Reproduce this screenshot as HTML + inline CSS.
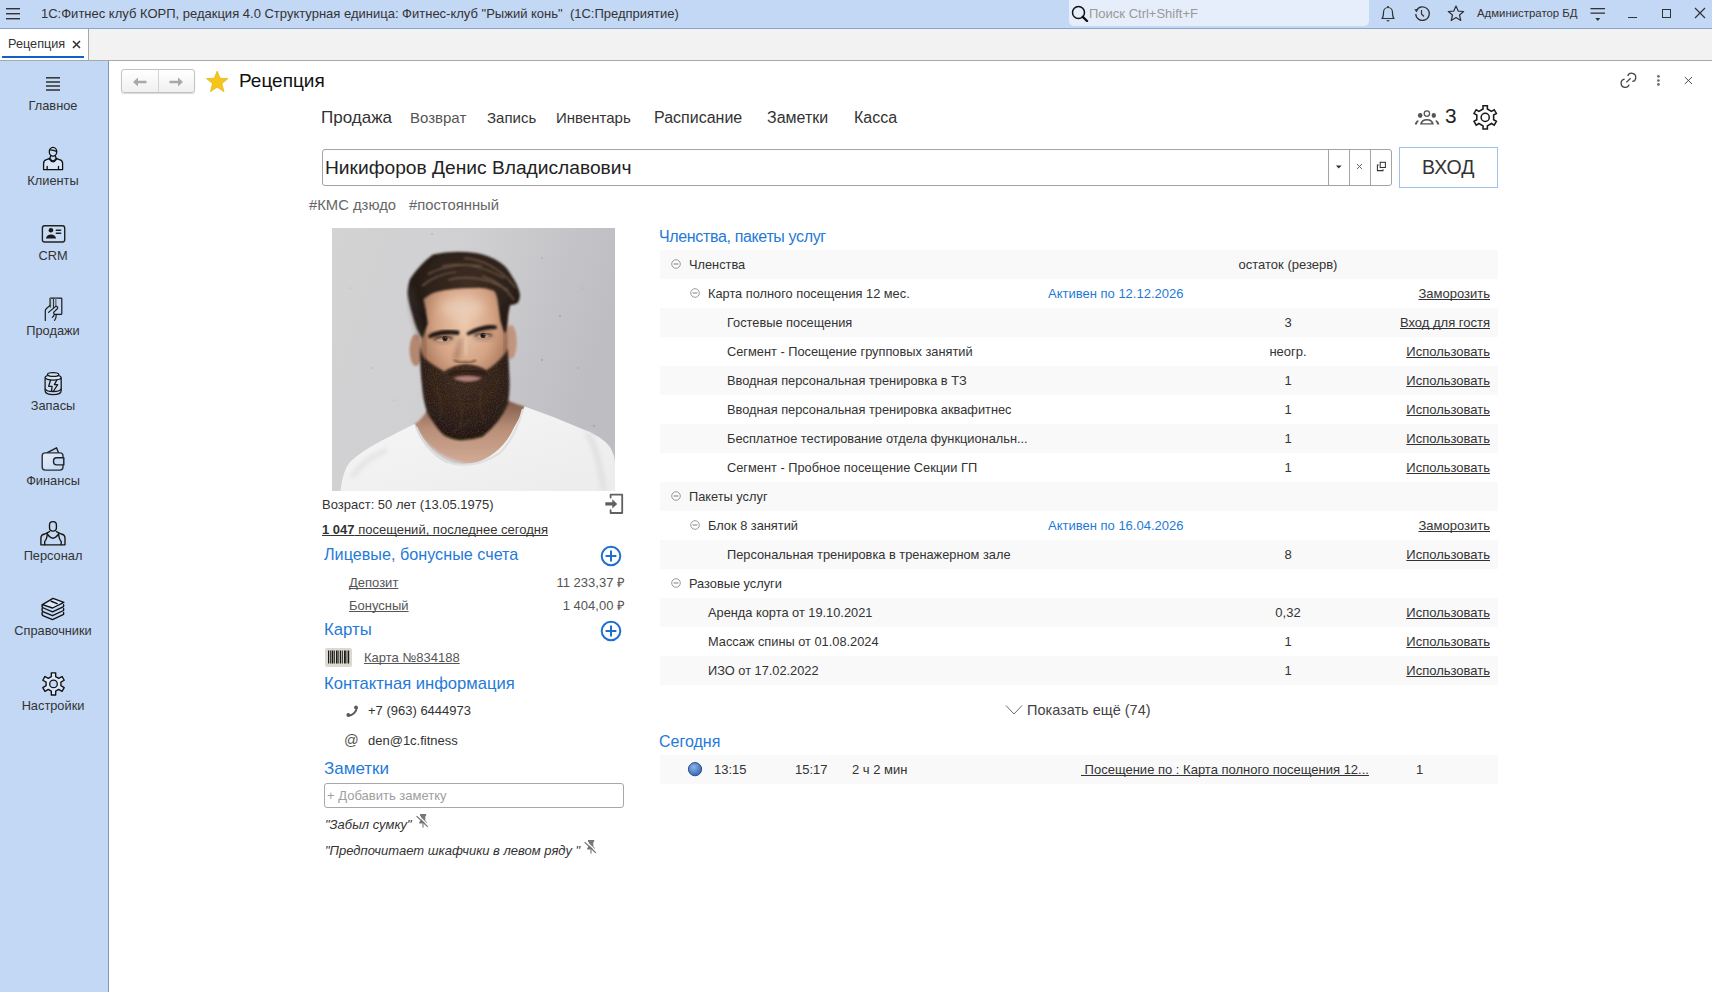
<!DOCTYPE html>
<html><head><meta charset="utf-8">
<style>
*{margin:0;padding:0;box-sizing:border-box}
html,body{width:1712px;height:992px;overflow:hidden;background:#fff;font-family:"Liberation Sans",sans-serif;color:#333;font-size:13px}
.a{position:absolute;white-space:nowrap}
#titlebar{position:absolute;left:0;top:0;width:1712px;height:29px;background:#c3d8f4;border-bottom:1px solid #8aa3c6}
#tabbar{position:absolute;left:0;top:29px;width:1712px;height:32px;background:#f2f2f2;border-bottom:1px solid #a8a8a8}
#sidebar{position:absolute;left:0;top:61px;width:109px;height:931px;background:#c3d8f4;border-right:1px solid #7f99bc}
.sb{position:absolute;left:-1px;width:108px;text-align:center;font-size:12.8px;color:#333}
.sbi{position:absolute;left:38px;width:30px;height:30px}
.u{text-decoration:underline}
*{text-decoration-skip-ink:none}
.blue{color:#1a73d9}
.row{position:absolute;left:660px;width:837px;height:29px}
.g{background:#f8f8f8}
.rowt{font-size:12.8px !important}
.mc{position:absolute;width:10px;height:10px;border:1px solid #999;border-radius:50%}
.mc:after{content:"";position:absolute;left:1.5px;top:3.5px;width:5px;height:1px;background:#888}
</style></head><body>

<div id="titlebar"></div>
<div id="tabbar"></div>
<div id="sidebar"></div>
<!-- TITLE BAR -->
<svg class="a" style="left:6px;top:7px" width="15" height="13" viewBox="0 0 15 13"><rect x="0" y="1" width="14" height="1.4" fill="#333"/><rect x="0" y="6" width="14" height="1.4" fill="#333"/><rect x="0" y="11" width="14" height="1.4" fill="#333"/></svg>
<div class="a" style="left:41px;top:6px;font-size:13px;color:#333;line-height:16px">1С:Фитнес клуб КОРП, редакция 4.0 Структурная единица: Фитнес-клуб "Рыжий конь"&nbsp; (1С:Предприятие)</div>
<div class="a" style="left:1069px;top:0;width:300px;height:26px;background:#e6eefb;border-radius:0 0 5px 5px"></div>
<svg class="a" style="left:1071px;top:5px" width="18" height="17" viewBox="0 0 18 17"><circle cx="7.5" cy="7.5" r="6" fill="none" stroke="#111" stroke-width="1.5"/><path d="M11.8 11.8 L16 16" stroke="#111" stroke-width="2.4" stroke-linecap="round"/></svg>
<div class="a" style="left:1089px;top:6px;font-size:13px;color:#999;line-height:16px">Поиск Ctrl+Shift+F</div>
<!-- bell -->
<svg class="a" style="left:1379px;top:4px" width="18" height="19" viewBox="0 0 18 19"><path d="M3 14.5 C4.5 13 4.5 11 4.5 8.5 C4.5 5.5 6.5 3.5 9 3.5 C11.5 3.5 13.5 5.5 13.5 8.5 C13.5 11 13.5 13 15 14.5 Z" fill="none" stroke="#333" stroke-width="1.2" stroke-linejoin="round"/><path d="M8.2 2 L9.8 2 L9.8 3.5 L8.2 3.5Z" fill="#333"/><path d="M7 16.2 L11 16.2 L9 17.8Z" fill="#333"/></svg>
<!-- history -->
<svg class="a" style="left:1413px;top:5px" width="18" height="17" viewBox="0 0 18 17"><path d="M3.6 5.2 A6.8 6.8 0 1 1 2.7 9" fill="none" stroke="#333" stroke-width="1.3"/><path d="M1.3 4.3 L5.3 4.3 L3.5 7.5Z" fill="#333"/><path d="M8.5 5 L8.5 9 L11 11.5" fill="none" stroke="#333" stroke-width="1.2"/></svg>
<!-- star outline -->
<svg class="a" style="left:1447px;top:5px" width="18" height="17" viewBox="0 0 18 17"><path d="M9 1 L11.2 6.1 L16.7 6.5 L12.5 10 L13.8 15.5 L9 12.5 L4.2 15.5 L5.5 10 L1.3 6.5 L6.8 6.1Z" fill="none" stroke="#333" stroke-width="1.2" stroke-linejoin="round"/></svg>
<div class="a" style="left:1477px;top:6px;font-size:11.4px;color:#333;line-height:15px">Администратор БД</div>
<!-- filter -->
<svg class="a" style="left:1589px;top:6px" width="18" height="17" viewBox="0 0 18 17"><rect x="1.5" y="2" width="14.5" height="1.3" fill="#333"/><rect x="1.5" y="6.5" width="14.5" height="1.3" fill="#333"/><path d="M6.3 12 L11.3 12 L8.8 15Z" fill="#333"/></svg>
<!-- min/max/close -->
<div class="a" style="left:1628px;top:17px;width:9px;height:1.3px;background:#333"></div>
<div class="a" style="left:1662px;top:9px;width:9px;height:9px;border:1.2px solid #333"></div>
<svg class="a" style="left:1694px;top:7px" width="12" height="12" viewBox="0 0 12 12"><path d="M1 1 L11 11 M11 1 L1 11" stroke="#333" stroke-width="1.2"/></svg>

<!-- TAB -->
<div class="a" style="left:0;top:29px;width:89px;height:31px;background:#fff;border-right:1px solid #a8a8a8"></div>
<div class="a" style="left:8px;top:36px;font-size:12.7px;color:#333;line-height:16px">Рецепция</div>
<svg class="a" style="left:72px;top:40px" width="9" height="9" viewBox="0 0 9 9"><path d="M1 1 L8 8 M8 1 L1 8" stroke="#333" stroke-width="1.6"/></svg>
<div class="a" style="left:2px;top:56px;width:82px;height:2px;background:#0d63c8"></div>

<!--SIDEBAR-->
<!-- SIDEBAR ICONS -->
<svg class="a" style="left:46px;top:76px" width="15" height="16" viewBox="0 0 15 16"><g fill="#3a3a3a"><rect x="0" y="1" width="14" height="1.6"/><rect x="0" y="5.2" width="14" height="1.6"/><rect x="0" y="9.2" width="14" height="1.6"/><rect x="0" y="13.2" width="14" height="1.6"/></g></svg>
<div class="sb" style="top:98px;line-height:15px">Главное</div>

<svg class="a" style="left:35px;top:140px" width="40" height="35" viewBox="0 0 40 35"><g fill="none" stroke="#111" stroke-width="1.3" stroke-linejoin="round" stroke-linecap="round"><path d="M8.6 29.6 V23.5 Q8.6 20.3 11.6 19.6 L14.8 18.4 Q18 23.4 21.2 18.4 L24.4 19.6 Q27.6 20.3 27.6 23.5 V29.6 Z" fill="#d9e6f8"/><ellipse cx="18" cy="11.7" rx="3.7" ry="4.4" fill="#c9dcf4"/><path d="M15.2 9.8 Q18.5 10.2 21.5 11.4"/><path d="M15.8 15.6 L14.8 18.4 M20.2 15.6 L21.2 18.4"/><path d="M14.2 19 Q18 24.6 21.8 19"/><path d="M12.2 26.3 V29.6 M23.5 26.3 V29.6"/></g></svg>
<div class="sb" style="top:173px;line-height:15px">Клиенты</div>

<svg class="a" style="left:35px;top:215px" width="40" height="35" viewBox="0 0 40 35"><rect x="7.4" y="10.7" width="22.3" height="16.3" rx="2.2" fill="#c8dcf5" stroke="#222" stroke-width="1.4"/><circle cx="15.9" cy="15.3" r="2.3" fill="#1a1a1a"/><path d="M10.9 23.6 Q11.8 19.6 16 19.6 Q20.2 19.6 21.1 23.6 Z" fill="#1a1a1a"/><rect x="20.6" y="14.6" width="5.8" height="1.4" rx="0.7" fill="#222"/><rect x="20.6" y="17.5" width="5.8" height="1.4" rx="0.7" fill="#222"/></svg>
<div class="sb" style="top:248px;line-height:15px">CRM</div>

<svg class="a" style="left:35px;top:290px" width="40" height="35" viewBox="0 0 40 35"><g fill="none" stroke="#1a1a1a" stroke-width="1.2" stroke-linejoin="round" stroke-linecap="round"><path d="M15.2 15.5 V8.6 Q15.2 8.2 15.7 8.2 H26.3 Q26.8 8.2 26.8 8.7 V23.8 Q26.8 24.3 26.3 24.3 H19.5"/><path d="M15.3 8.5 V17" stroke="#555" stroke-width="1.6"/><path d="M18.5 8.5 V18" stroke="#333"/><path d="M20.8 8.5 V16.3" stroke="#777" stroke-width="1.5"/><path d="M10.3 30.4 V20.8 Q10.3 19.6 11.5 18.5 L15 15.4"/><path d="M13.5 22.4 L20.4 16.6 Q21.8 15.7 22.6 17.2 Q23 18.2 22.1 19 L18.8 22.1 Q18.3 23 19.1 23.8"/><path d="M17.3 27.4 Q18.8 26.2 19.2 24.6 M19.5 30.4 Q21.3 28.2 21.2 25"/></g></svg>
<div class="sb" style="top:323px;line-height:15px">Продажи</div>

<svg class="a" style="left:35px;top:365px" width="40" height="35" viewBox="0 0 40 35"><g fill="none" stroke="#1a1a1a" stroke-width="1.3" stroke-linejoin="round" stroke-linecap="round"><path d="M10.1 13.3 V25.6 Q10.1 29.7 18.1 29.7 Q26.2 29.7 26.2 25.6 V13.3" fill="#cadcf4"/><ellipse cx="18.1" cy="12.6" rx="8" ry="2.5" fill="#d5e4f8"/><ellipse cx="18.1" cy="9.5" rx="5.7" ry="1.9" fill="#d5e4f8"/><path d="M10.4 24.2 Q11.5 26.5 18.1 26.5 Q24.8 26.5 25.9 24.2"/><path d="M15.5 15.3 L13.7 21.3 H17.1 L16.5 25.8 M21.7 15.3 L19.4 19.6 H22.7 L18.5 26"/></g></svg>
<div class="sb" style="top:398px;line-height:15px">Запасы</div>

<svg class="a" style="left:35px;top:440px" width="40" height="35" viewBox="0 0 40 35"><defs><linearGradient id="wg" x1="0" y1="0" x2="1" y2="1"><stop offset="0" stop-color="#e8f0fb"/><stop offset="1" stop-color="#c2d6f0"/></linearGradient></defs><g fill="none" stroke="#1c1f24" stroke-width="1.4" stroke-linejoin="round" stroke-linecap="round"><path d="M12.3 12.6 L21.5 7.8 L23.4 12.6"/><rect x="7.2" y="12.9" width="20.8" height="17.2" rx="3" fill="url(#wg)" stroke="#2a2f38"/><path d="M28.8 17.7 H21.6 Q18.5 17.7 18.5 21.2 Q18.5 24.9 21.6 24.9 H28.8 Z" fill="#c5d8f2"/></g></svg>
<div class="sb" style="top:473px;line-height:15px">Финансы</div>

<svg class="a" style="left:35px;top:515px" width="40" height="35" viewBox="0 0 40 35"><g fill="none" stroke="#17140a" stroke-width="1.35" stroke-linejoin="round" stroke-linecap="round"><rect x="14.5" y="6.6" width="6.9" height="9.5" rx="3.4"/><path d="M14.5 16.6 L9.8 19 Q5.9 19.5 5.9 23.2 V29.8 H30 V23.2 Q30 19.5 26.1 19 L21.4 16.6"/><path d="M12.2 18.2 Q12.3 23.6 9.6 26.6 L9.8 29.6 M23.7 18.2 Q23.6 23.6 26.3 26.6 L26.1 29.6"/><path d="M12.5 19.2 Q17.9 27.2 23.4 19.2"/></g></svg>
<div class="sb" style="top:548px;line-height:15px">Персонал</div>

<svg class="a" style="left:35px;top:590px" width="40" height="35" viewBox="0 0 40 35"><g fill="none" stroke="#111" stroke-width="1.35" stroke-linejoin="round" stroke-linecap="round"><path d="M7.4 14.6 L18 8.3 L28.8 12.4 L17.6 18 Z" fill="#dde9f9"/><path d="M16.2 11.3 L22.2 13.6" stroke-width="1.5"/><path d="M7.2 14.6 Q6.5 17.2 8.4 18 L17.5 21.8 L28.6 16.6 V14.6"/><path d="M7.2 18.5 Q6.5 21.1 8.4 21.9 L17.5 25.7 L28.6 20.5 V18.5"/><path d="M7.2 22.4 Q6.5 25 8.4 25.8 L17.5 29.6 L28.6 24.4 V22.4"/></g></svg>
<div class="sb" style="top:623px;line-height:15px">Справочники</div>

<svg class="a" style="left:35px;top:665px" width="40" height="35" viewBox="0 0 40 35"><path d="M16.33 11.62 L16.31 7.81 L20.69 7.81 L20.67 11.62 L23.72 13.38 L27.01 11.46 L29.19 15.25 L25.89 17.14 L25.89 20.66 L29.19 22.55 L27.01 26.34 L23.72 24.42 L20.67 26.18 L20.69 29.99 L16.31 29.99 L16.33 26.18 L13.28 24.42 L9.99 26.34 L7.81 22.55 L11.11 20.66 L11.11 17.14 L7.81 15.25 L9.99 11.46 L13.28 13.38Z" fill="#dce8f8" stroke="#111" stroke-width="1.35" stroke-linejoin="round"/><circle cx="18.5" cy="18.9" r="3.8" fill="#c5d9f3" stroke="#111" stroke-width="1.3"/></svg>
<div class="sb" style="top:698px;line-height:15px">Настройки</div>

<!--MAIN-->
<!-- FORM HEADER -->
<div class="a" style="left:121px;top:69px;width:74px;height:24px;border:1px solid #c2c2c2;border-radius:3px;background:linear-gradient(#fff,#f0f0f0);box-shadow:0 1px 1px rgba(0,0,0,.15)"></div>
<div class="a" style="left:158px;top:70px;width:1px;height:22px;background:#d4d4d4"></div>
<svg class="a" style="left:132px;top:76px" width="16" height="12" viewBox="0 0 16 12"><path d="M1 6 L6 1.5 V4.8 H14.5 V7.2 H6 V10.5Z" fill="#a8a8a8"/></svg>
<svg class="a" style="left:168px;top:76px" width="16" height="12" viewBox="0 0 16 12"><path d="M15 6 L10 1.5 V4.8 H1.5 V7.2 H10 V10.5Z" fill="#a8a8a8"/></svg>
<svg class="a" style="left:205px;top:70px" width="25" height="24" viewBox="0 0 25 24"><path d="M12.2 1 L15.1 8.2 L23 8.6 L16.9 13.5 L19 21.8 L12.2 17.2 L5.4 21.8 L7.5 13.5 L1.4 8.6 L9.3 8.2Z" fill="#f5c518" stroke="#e0ac00" stroke-width="0.6" stroke-linejoin="round"/></svg>
<div class="a" style="left:239px;top:70px;font-size:19px;line-height:22px;color:#111">Рецепция</div>
<!-- right header icons -->
<svg class="a" style="left:1619px;top:71px" width="19" height="19" viewBox="0 0 19 19"><g fill="none" stroke="#444" stroke-width="1.3" stroke-linecap="butt"><path d="M8.8 5.0 A4.1 4.1 0 1 1 13.3 10.4"/><path d="M10.1 13.6 A4.1 4.1 0 1 1 5.6 8.2"/><path d="M7.3 11.4 L11.6 7.2"/></g></svg>
<svg class="a" style="left:1655px;top:73px" width="7" height="14" viewBox="0 0 7 14"><g fill="#6a6a6a"><circle cx="3.4" cy="3.3" r="1.35"/><circle cx="3.4" cy="7.5" r="1.35"/><circle cx="3.4" cy="11.4" r="1.35"/></g></svg>
<svg class="a" style="left:1683px;top:76px" width="11" height="10" viewBox="0 0 11 10"><path d="M1.8 1 L9 8 M9 1 L1.8 8" stroke="#444" stroke-width="0.95"/></svg>

<!-- MENU -->
<div class="a" style="left:321px;top:108px;font-size:17px;line-height:20px;color:#333">Продажа</div>
<div class="a" style="left:410px;top:108px;font-size:15px;line-height:20px;color:#555">Возврат</div>
<div class="a" style="left:487px;top:108px;font-size:15px;line-height:20px;color:#333">Запись</div>
<div class="a" style="left:556px;top:108px;font-size:15px;line-height:20px;color:#333">Инвентарь</div>
<div class="a" style="left:654px;top:108px;font-size:16px;line-height:20px;color:#333">Расписание</div>
<div class="a" style="left:767px;top:108px;font-size:16px;line-height:20px;color:#333">Заметки</div>
<div class="a" style="left:854px;top:108px;font-size:16px;line-height:20px;color:#333">Касса</div>

<svg class="a" style="left:1413px;top:108px" width="28" height="18" viewBox="0 0 28 18"><g fill="#555"><circle cx="13.9" cy="5.6" r="2.7" fill="none" stroke="#555" stroke-width="1.3"/><ellipse cx="7.2" cy="7.5" rx="2.3" ry="2.4"/><ellipse cx="20.8" cy="7.5" rx="2.2" ry="2.4"/><path d="M7 16.6 Q7.6 11 13.9 11 Q20.2 11 20.9 16.6 Z M9.2 15.2 Q10 12.6 13.9 12.6 Q17.8 12.6 18.6 15.2Z" fill-rule="evenodd"/><path d="M1.8 16.6 Q2.2 13 5.2 12 L5.6 13.2 Q4.1 14.3 3.9 16.6Z"/><path d="M26.3 16.6 Q25.9 13 22.9 12 L22.5 13.2 Q24 14.3 24.2 16.6Z"/></g></svg>
<div class="a" style="left:1445px;top:104px;font-size:20.8px;line-height:24px;color:#222">3</div>
<svg class="a" style="left:1472px;top:104px" width="26" height="26" viewBox="-0.7 -0.9 25 25"><path d="M9.92 3.86 L9.91 0.79 L14.09 0.79 L14.08 3.86 L18.01 6.13 L20.66 4.59 L22.75 8.20 L20.09 9.73 L20.09 14.27 L22.75 15.80 L20.66 19.41 L18.01 17.87 L14.08 20.14 L14.09 23.21 L9.91 23.21 L9.92 20.14 L5.99 17.87 L3.34 19.41 L1.25 15.80 L3.91 14.27 L3.91 9.73 L1.25 8.20 L3.34 4.59 L5.99 6.13Z" fill="#fff" stroke="#1a1a1a" stroke-width="1.5" stroke-linejoin="miter"/><circle cx="12" cy="12" r="3.9" fill="#fff" stroke="#1a1a1a" stroke-width="1.45"/></svg>

<!-- NAME INPUT -->
<div class="a" style="left:322px;top:149px;width:1070px;height:37px;border:1px solid #a3a3a3;border-radius:3px;background:#fff"></div>
<div class="a" style="left:1328px;top:150px;width:1px;height:35px;background:#a3a3a3"></div>
<div class="a" style="left:1349px;top:150px;width:1px;height:35px;background:#a3a3a3"></div>
<div class="a" style="left:1370px;top:150px;width:1px;height:35px;background:#a3a3a3"></div>
<div class="a" style="left:325px;top:156px;font-size:19.2px;line-height:23px;color:#222">Никифоров Денис Владиславович</div>
<svg class="a" style="left:1335px;top:165px" width="8" height="5" viewBox="0 0 8 5"><path d="M0.9 0.4 H6.6 L3.75 3.6Z" fill="#333"/></svg>
<svg class="a" style="left:1356px;top:163px" width="7" height="7" viewBox="0 0 7 7"><path d="M1 1 L6 6 M6 1 L1 6" stroke="#555" stroke-width="0.9"/></svg>
<svg class="a" style="left:1376px;top:161px" width="11" height="11" viewBox="0 0 11 11"><g fill="none" stroke="#333" stroke-width="1.05"><rect x="4.2" y="1.3" width="5.2" height="5.2"/><path d="M2.8 4 H1.4 V9.6 H7 V8.2"/></g></svg>
<div class="a" style="left:1399px;top:147px;width:99px;height:41px;border:1.5px solid #9ec1ef;background:#fff"></div>
<div class="a" style="left:1422px;top:156px;font-size:19.5px;line-height:23px;color:#333">ВХОД</div>

<!-- TAGS -->
<div class="a" style="left:309px;top:197px;font-size:14.8px;line-height:17px;color:#666">#КМС дзюдо</div>
<div class="a" style="left:409px;top:197px;font-size:14.8px;line-height:17px;color:#666">#постоянный</div>

<!--MAIN2-->
<!-- PHOTO -->
<div id="photo" class="a" style="left:332px;top:228px;width:283px;height:263px;overflow:hidden;background:#c4c4c6">
<!--PHOTOSVG-->
<svg width="283" height="263" viewBox="0 0 283 263">
<defs>
<linearGradient id="bgG" x1="0" y1="0" x2="1" y2="0.3"><stop offset="0" stop-color="#d3d3d4"/><stop offset="0.45" stop-color="#d0d0d2"/><stop offset="1" stop-color="#bdbdc2"/></linearGradient>
<radialGradient id="skinG" cx="0.5" cy="0.35" r="0.6"><stop offset="0" stop-color="#ecc9ad"/><stop offset="0.55" stop-color="#d4a384"/><stop offset="1" stop-color="#9a6a50"/></radialGradient>
<radialGradient id="hairG" cx="0.55" cy="0.35" r="0.65"><stop offset="0" stop-color="#3f2f24"/><stop offset="0.6" stop-color="#2c2019"/><stop offset="1" stop-color="#1e1611"/></radialGradient>
<radialGradient id="beardG" cx="0.5" cy="0.3" r="0.7"><stop offset="0" stop-color="#3e2a1f"/><stop offset="0.6" stop-color="#2e1f17"/><stop offset="1" stop-color="#1f1510"/></radialGradient>
<linearGradient id="neckG" x1="0" y1="0" x2="0" y2="1"><stop offset="0" stop-color="#7e5a48"/><stop offset="0.45" stop-color="#b98f78"/><stop offset="1" stop-color="#d2ac96"/></linearGradient>
<linearGradient id="shirtG" x1="0" y1="0" x2="1" y2="1"><stop offset="0" stop-color="#f6f6f6"/><stop offset="1" stop-color="#ececed"/></linearGradient>
<filter id="tex" x="0" y="0" width="100%" height="100%"><feTurbulence type="fractalNoise" baseFrequency="0.9" numOctaves="2" seed="3"/><feColorMatrix values="0 0 0 0 0.33  0 0 0 0 0.22  0 0 0 0 0.15  0 0 0 1.4 -0.6"/><feComposite in2="SourceGraphic" operator="in"/></filter>
<filter id="bl1" x="-10%" y="-10%" width="120%" height="120%"><feGaussianBlur stdDeviation="0.9"/></filter>
<filter id="bl2" x="-30%" y="-30%" width="160%" height="160%"><feGaussianBlur stdDeviation="2.5"/></filter>
<filter id="bl3" x="-30%" y="-30%" width="160%" height="160%"><feGaussianBlur stdDeviation="5"/></filter>
</defs>
<rect width="283" height="263" fill="url(#bgG)"/>
<g fill="#85858a" opacity="0.55">
<circle cx="100" cy="6" r="0.8"/><circle cx="210" cy="30" r="0.7"/><circle cx="228" cy="88" r="0.9"/><circle cx="246" cy="140" r="0.8"/><circle cx="210" cy="132" r="0.9"/><circle cx="40" cy="140" r="0.7"/><circle cx="262" cy="198" r="1"/><circle cx="62" cy="172" r="0.6"/><circle cx="18" cy="60" r="0.6"/><circle cx="250" cy="60" r="0.6"/>
</g>
<!-- neck -->
<path d="M96 180 Q92 190 82.6 196 Q100 232 142 236 Q182 226 192.6 178.6 Q184 176 174 172 Q150 205 128 208 Q105 200 96 180 Z" fill="url(#neckG)" filter="url(#bl1)"/>
<!-- shirt -->
<path d="M0 263 L8.3 263 Q11 242 18 234 Q30 222 57.9 208.4 Q70 202 82.6 196 Q92 222 115 234.8 Q128 238 142 235.6 Q170 226 181.8 200 Q188 190 192.6 178.6 Q220 188 248 200 Q270 208 278 219 Q283 228 283 235 L283 263 Z" fill="url(#shirtG)"/>
<path d="M84 199 Q96 228 122 236 Q145 240 168 225 Q184 208 191 181" fill="none" stroke="#e0e0e0" stroke-width="2.2"/>
<path d="M82.6 196 Q93 224 115 234.8" fill="none" stroke="#d6d6d6" stroke-width="1"/>
<path d="M255 205 Q266 220 272 263" fill="none" stroke="#dedee0" stroke-width="5" filter="url(#bl2)"/>
<path d="M20 250 Q30 232 55 222" fill="none" stroke="#e2e2e3" stroke-width="5" filter="url(#bl2)"/>
<!-- ears -->
<ellipse cx="84" cy="122" rx="6.5" ry="16" fill="#b48770" filter="url(#bl1)"/>
<ellipse cx="179" cy="114" rx="5.8" ry="17" fill="#c09580" filter="url(#bl1)"/>
<!-- face -->
<path d="M89 100 Q86 60 110 52 Q132 46 158 52 Q176 62 176 95 Q178 130 170 160 Q150 180 132 180 Q108 176 94 160 Q88 130 89 100 Z" fill="url(#skinG)" filter="url(#bl1)"/>
<ellipse cx="130" cy="80" rx="22" ry="11" fill="#f0d9c8" opacity="0.5" filter="url(#bl3)"/>
<!-- temple shadows -->
<path d="M91 80 Q90 110 94 135" fill="none" stroke="#7c5a48" stroke-width="5" opacity="0.55" filter="url(#bl2)"/>
<path d="M172 80 Q176 110 172 132" fill="none" stroke="#7c5a48" stroke-width="5" opacity="0.5" filter="url(#bl2)"/>
<!-- hair -->
<path d="M90 110 Q84 100 81 88 Q77 75 76 66 Q76 56 78 51 Q88 36 101 26.5 Q120 22 142 24.7 Q158 27 168.6 34.7 Q176 40 180.6 49.3 Q186 57 188 66.7 Q188 71 186 74.7 Q182 77 178 77.3 Q176 86 175.3 93.3 Q174.5 99 174 104 Q172.5 104 172.6 105 Q170 98 168.6 93.3 Q167 82 166 74.7 Q165 66 162 62.7 Q152 59 142 60 Q120 60 104 64 Q95 67 91.8 71.6 Q94 84 95.8 95.6 Q93 102 91.8 106 Z" fill="url(#hairG)" filter="url(#bl1)"/>
<path d="M78 60 Q82 85 90 108" fill="none" stroke="#3d3630" stroke-width="7" opacity="0.45" filter="url(#bl2)"/>
<g fill="none" stroke="#7b6351" stroke-width="1.7" opacity="0.75" filter="url(#bl1)">
<path d="M96 46 Q120 34 150 38"/><path d="M110 38 Q140 32 172 50"/><path d="M116 52 Q146 44 176 62"/><path d="M90 58 Q104 46 124 44"/><path d="M132 30 Q162 32 184 60"/><path d="M150 48 Q170 54 182 72"/>
</g>
<!-- eye socket shading -->
<ellipse cx="111" cy="110" rx="11" ry="5" fill="#7a5442" opacity="0.5" filter="url(#bl2)"/>
<ellipse cx="151" cy="107" rx="11" ry="5" fill="#7a5442" opacity="0.5" filter="url(#bl2)"/>
<!-- brows -->
<path d="M96 107.5 Q103 102 116 102 Q124 102 127.5 103 L127 107 Q118 106 110 107 Q102 108.5 97 110.5 Z" fill="#221712" filter="url(#bl1)"/>
<path d="M134.5 105 Q142 100 151 98 Q159 96 165 98 L164.5 101 Q155 101 147 103.5 Q140 106 135.5 107.5 Z" fill="#221712" filter="url(#bl1)"/>
<!-- eyes -->
<path d="M102.5 112 Q110 107.5 120 110.5 Q111 115 102.5 112Z" fill="#cdb5a5"/>
<path d="M143.5 108 Q151 104 159 107.5 Q151 111.5 143.5 108Z" fill="#cdb5a5"/>
<circle cx="113" cy="110.6" r="2.6" fill="#3b271c"/><circle cx="151" cy="107.4" r="2.6" fill="#3b271c"/>
<circle cx="113" cy="110.6" r="1.1" fill="#0e0a08"/><circle cx="151" cy="107.4" r="1.1" fill="#0e0a08"/>
<circle cx="113.8" cy="109.8" r="0.6" fill="#fff" opacity="0.8"/><circle cx="151.8" cy="106.6" r="0.6" fill="#fff" opacity="0.8"/>
<path d="M102 112 Q110 107 120.5 110.5" fill="none" stroke="#2a1a12" stroke-width="1.4" filter="url(#bl1)"/>
<path d="M143 108 Q151 103.5 159.5 107.5" fill="none" stroke="#2a1a12" stroke-width="1.4" filter="url(#bl1)"/>
<!-- nose shading -->
<path d="M127 110 Q124 122 121 130 Q124 133 127 131 Q129 120 130 110Z" fill="#8a5f4a" opacity="0.55" filter="url(#bl2)"/>
<path d="M133 112 Q134 122 135 128" stroke="#f4dccb" stroke-width="3.5" opacity="0.45" filter="url(#bl2)"/>
<path d="M122 132 Q127 136 133 134 Q139 136 144 132" fill="none" stroke="#5a3626" stroke-width="2.2" opacity="0.75" filter="url(#bl1)"/>
<!-- beard -->
<path d="M88 118 Q88 142 90 157.5 Q91 170 93.5 178.8 Q96 188 100.6 193 Q106 202 112 207.3 Q120 212 129 212.2 Q140 212 150.4 208.7 Q159 202 166 193 Q172 185 176 176 Q178 163 177.4 150.4 Q177 135 175.5 120 Q174 126 172.7 126 Q165 136 154.5 142.2 Q146 137 134 136 Q122 137 112.2 143.4 Q100 137 91.6 129.5 Q89 124 88 118 Z" fill="url(#beardG)" filter="url(#bl1)"/>
<path d="M88 118 Q88 142 90 157.5 Q91 170 93.5 178.8 Q96 188 100.6 193 Q106 202 112 207.3 Q120 212 129 212.2 Q140 212 150.4 208.7 Q159 202 166 193 Q172 185 176 176 Q178 163 177.4 150.4 Q177 135 175.5 120 Q174 126 172.7 126 Q165 136 154.5 142.2 Q146 137 134 136 Q122 137 112.2 143.4 Q100 137 91.6 129.5 Q89 124 88 118 Z" fill="#000" filter="url(#tex)" opacity="0.45"/>
<g fill="none" stroke="#56402f" stroke-width="1.5" opacity="0.5" filter="url(#bl1)">
<path d="M104 160 Q112 175 108 190"/><path d="M125 165 Q133 180 128 198"/><path d="M150 160 Q145 178 152 192"/><path d="M140 190 Q130 200 120 204"/>
</g>
<!-- lips -->
<path d="M121 150 Q134 145.5 150 150 Q136 157.5 121 150Z" fill="#b0807a" filter="url(#bl1)"/>
<path d="M117 147 Q133 139 154 146" fill="none" stroke="#2b1d17" stroke-width="3.2" filter="url(#bl1)"/>
</svg>
<!--/PHOTOSVG-->
</div>

<!-- LEFT INFO -->
<div class="a" style="left:322px;top:497px;font-size:13px;line-height:15px;color:#333">Возраст: 50 лет (13.05.1975)</div>
<svg class="a" style="left:603px;top:493px" width="22" height="22" viewBox="0 0 22 22"><path d="M7.6 4.6 V1.6 H19.2 V20 H7.6 V17.2" fill="none" stroke="#606060" stroke-width="1.8" stroke-linejoin="round" stroke-linecap="round"/><path d="M2.3 9.2 H9.3 V6.2 L14.2 10.9 L9.3 15.6 V12.6 H2.3Z" fill="#606060"/></svg>
<div class="a" style="left:322px;top:522px;font-size:13px;line-height:15px;color:#333;text-decoration:underline"><b>1 047</b> посещений, последнее сегодня</div>

<div class="a" style="left:324px;top:545px;font-size:16.2px;line-height:19px;color:#1f7ad8">Лицевые, бонусные счета</div>
<svg class="a" style="left:600px;top:545px" width="22" height="22" viewBox="0 0 22 22"><circle cx="11" cy="11" r="9.3" fill="none" stroke="#1f6fd0" stroke-width="2"/><path d="M11 5.6 V16.4 M5.6 11 H16.4" stroke="#1f6fd0" stroke-width="2"/></svg>
<div class="a" style="left:349px;top:575px;font-size:13px;line-height:15px;color:#555;text-decoration:underline">Депозит</div>
<div class="a" style="left:525px;width:100px;text-align:right;top:575px;font-size:13px;line-height:15px;color:#555">11 233,37 ₽</div>
<div class="a" style="left:349px;top:598px;font-size:13px;line-height:15px;color:#555;text-decoration:underline">Бонусный</div>
<div class="a" style="left:525px;width:100px;text-align:right;top:598px;font-size:13px;line-height:15px;color:#555">1 404,00 ₽</div>

<div class="a" style="left:324px;top:620px;font-size:16.8px;line-height:19px;color:#1f7ad8">Карты</div>
<svg class="a" style="left:600px;top:620px" width="22" height="22" viewBox="0 0 22 22"><circle cx="11" cy="11" r="9.3" fill="none" stroke="#1f6fd0" stroke-width="2"/><path d="M11 5.6 V16.4 M5.6 11 H16.4" stroke="#1f6fd0" stroke-width="2"/></svg>
<svg class="a" style="left:325px;top:648px" width="27" height="19" viewBox="0 0 27 19"><rect x="0" y="0" width="27" height="19" rx="2" fill="#ddd9d0"/><g fill="#1a1a1a"><rect x="3" y="2.5" width="1.2" height="13"/><rect x="5" y="2.5" width="0.8" height="13"/><rect x="6.6" y="2.5" width="1.8" height="13"/><rect x="9.2" y="2.5" width="0.8" height="13"/><rect x="11" y="2.5" width="1.6" height="13"/><rect x="13.4" y="2.5" width="0.8" height="13"/><rect x="15" y="2.5" width="1.2" height="13"/><rect x="17.2" y="2.5" width="0.8" height="13"/><rect x="19" y="2.5" width="1.8" height="13"/><rect x="21.6" y="2.5" width="0.8" height="13"/><rect x="23" y="2.5" width="1.2" height="13"/></g></svg>
<div class="a" style="left:364px;top:650px;font-size:13px;line-height:15px;color:#555;text-decoration:underline">Карта №834188</div>

<div class="a" style="left:324px;top:674px;font-size:16.6px;line-height:19px;color:#1f7ad8">Контактная информация</div>
<svg class="a" style="left:345px;top:704px" width="14" height="14" viewBox="0 0 14 14"><path d="M11.6 4.2 Q11.6 6.6 9.2 9 Q6.6 11.4 4 11.5" fill="none" stroke="#5a5a5a" stroke-width="1.9"/><circle cx="11" cy="3.4" r="1.9" fill="#5a5a5a"/><circle cx="3.3" cy="11" r="1.9" fill="#5a5a5a"/></svg>
<div class="a" style="left:368px;top:703px;font-size:13px;line-height:15px;color:#333">+7 (963) 6444973</div>
<div class="a" style="left:344px;top:732px;font-size:14.5px;line-height:17px;color:#555">@</div>
<div class="a" style="left:368px;top:733px;font-size:13px;line-height:15px;color:#333">den@1c.fitness</div>

<div class="a" style="left:324px;top:759px;font-size:17px;line-height:19px;color:#1f7ad8">Заметки</div>
<div class="a" style="left:324px;top:783px;width:300px;height:25px;border:1px solid #a8a8a8;border-radius:3px;background:#fff"></div>
<div class="a" style="left:327px;top:788px;font-size:13px;line-height:15px;color:#a0a0a0">+ Добавить заметку</div>
<div class="a" style="left:325px;top:817px;font-size:13px;line-height:15px;color:#333;font-style:italic">"Забыл сумку"</div>
<svg class="a" style="left:416px;top:813px" width="13" height="16" viewBox="0 0 13 16"><path d="M4 1 H10.2 V2.4 L9.3 3.4 V7.4 L10.8 8.9 V10.5 H3.2 V8.9 L4.8 7.4 V3.4 L4 2.4Z" fill="#777"/><rect x="6.2" y="10.4" width="1.5" height="4.2" fill="#9a9a9a"/><path d="M1.6 2 L12.8 12.8" stroke="#fff" stroke-width="1.3"/><path d="M0.6 3.1 L11.8 13.9" stroke="#707070" stroke-width="1.3"/></svg>
<div class="a" style="left:325px;top:843px;font-size:13px;line-height:15px;color:#333;font-style:italic">"Предпочитает шкафчики в левом ряду "</div>
<svg class="a" style="left:584px;top:839px" width="13" height="16" viewBox="0 0 13 16"><path d="M4 1 H10.2 V2.4 L9.3 3.4 V7.4 L10.8 8.9 V10.5 H3.2 V8.9 L4.8 7.4 V3.4 L4 2.4Z" fill="#777"/><rect x="6.2" y="10.4" width="1.5" height="4.2" fill="#9a9a9a"/><path d="M1.6 2 L12.8 12.8" stroke="#fff" stroke-width="1.3"/><path d="M0.6 3.1 L11.8 13.9" stroke="#707070" stroke-width="1.3"/></svg>

<!--MAIN3-->
<!-- TABLE -->
<div class="a blue2" style="left:659px;top:227px;font-size:16px;line-height:19px;letter-spacing:-0.35px;color:#1f7ad8">Членства, пакеты услуг</div>
<div class="a" style="left:660px;top:250px;width:838px;height:29px;background:#f9f9f9"></div>
<svg class="a" style="left:671px;top:259px" width="10" height="10" viewBox="0 0 10 10"><circle cx="5" cy="5" r="4.3" fill="none" stroke="#9a9a9a" stroke-width="1"/><path d="M2.6 5 H7.4" stroke="#8a8a8a" stroke-width="1.1"/></svg>
<div class="a rowt" style="left:689px;top:257px;font-size:13px;line-height:15px;color:#333">Членства</div>
<div class="a" style="left:1188px;width:200px;text-align:center;top:257px;font-size:13px;line-height:15px;color:#333">остаток (резерв)</div>
<svg class="a" style="left:690px;top:288px" width="10" height="10" viewBox="0 0 10 10"><circle cx="5" cy="5" r="4.3" fill="none" stroke="#9a9a9a" stroke-width="1"/><path d="M2.6 5 H7.4" stroke="#8a8a8a" stroke-width="1.1"/></svg>
<div class="a rowt" style="left:708px;top:286px;font-size:13px;line-height:15px;color:#333">Карта полного посещения 12 мес.</div>
<div class="a" style="left:1048px;top:286px;font-size:13px;line-height:15px;color:#1f7ad8">Активен по 12.12.2026</div>
<div class="a" style="left:1290px;width:200px;text-align:right;top:286px;font-size:13px;line-height:15px;color:#333;text-decoration:underline">Заморозить</div>
<div class="a" style="left:660px;top:308px;width:838px;height:29px;background:#f9f9f9"></div>
<div class="a rowt" style="left:727px;top:315px;font-size:13px;line-height:15px;color:#333">Гостевые посещения</div>
<div class="a" style="left:1188px;width:200px;text-align:center;top:315px;font-size:13px;line-height:15px;color:#333">3</div>
<div class="a" style="left:1290px;width:200px;text-align:right;top:315px;font-size:13px;line-height:15px;color:#333;text-decoration:underline">Вход для гостя</div>
<div class="a rowt" style="left:727px;top:344px;font-size:13px;line-height:15px;color:#333">Сегмент - Посещение групповых занятий</div>
<div class="a" style="left:1188px;width:200px;text-align:center;top:344px;font-size:13px;line-height:15px;color:#333">неогр.</div>
<div class="a" style="left:1290px;width:200px;text-align:right;top:344px;font-size:13px;line-height:15px;color:#333;text-decoration:underline">Использовать</div>
<div class="a" style="left:660px;top:366px;width:838px;height:29px;background:#f9f9f9"></div>
<div class="a rowt" style="left:727px;top:373px;font-size:13px;line-height:15px;color:#333">Вводная персональная тренировка в ТЗ</div>
<div class="a" style="left:1188px;width:200px;text-align:center;top:373px;font-size:13px;line-height:15px;color:#333">1</div>
<div class="a" style="left:1290px;width:200px;text-align:right;top:373px;font-size:13px;line-height:15px;color:#333;text-decoration:underline">Использовать</div>
<div class="a rowt" style="left:727px;top:402px;font-size:13px;line-height:15px;color:#333">Вводная персональная тренировка аквафитнес</div>
<div class="a" style="left:1188px;width:200px;text-align:center;top:402px;font-size:13px;line-height:15px;color:#333">1</div>
<div class="a" style="left:1290px;width:200px;text-align:right;top:402px;font-size:13px;line-height:15px;color:#333;text-decoration:underline">Использовать</div>
<div class="a" style="left:660px;top:424px;width:838px;height:29px;background:#f9f9f9"></div>
<div class="a rowt" style="left:727px;top:431px;font-size:13px;line-height:15px;color:#333">Бесплатное тестирование отдела функциональн...</div>
<div class="a" style="left:1188px;width:200px;text-align:center;top:431px;font-size:13px;line-height:15px;color:#333">1</div>
<div class="a" style="left:1290px;width:200px;text-align:right;top:431px;font-size:13px;line-height:15px;color:#333;text-decoration:underline">Использовать</div>
<div class="a rowt" style="left:727px;top:460px;font-size:13px;line-height:15px;color:#333">Сегмент - Пробное посещение Секции ГП</div>
<div class="a" style="left:1188px;width:200px;text-align:center;top:460px;font-size:13px;line-height:15px;color:#333">1</div>
<div class="a" style="left:1290px;width:200px;text-align:right;top:460px;font-size:13px;line-height:15px;color:#333;text-decoration:underline">Использовать</div>
<div class="a" style="left:660px;top:482px;width:838px;height:29px;background:#f9f9f9"></div>
<svg class="a" style="left:671px;top:491px" width="10" height="10" viewBox="0 0 10 10"><circle cx="5" cy="5" r="4.3" fill="none" stroke="#9a9a9a" stroke-width="1"/><path d="M2.6 5 H7.4" stroke="#8a8a8a" stroke-width="1.1"/></svg>
<div class="a rowt" style="left:689px;top:489px;font-size:13px;line-height:15px;color:#333">Пакеты услуг</div>
<svg class="a" style="left:690px;top:520px" width="10" height="10" viewBox="0 0 10 10"><circle cx="5" cy="5" r="4.3" fill="none" stroke="#9a9a9a" stroke-width="1"/><path d="M2.6 5 H7.4" stroke="#8a8a8a" stroke-width="1.1"/></svg>
<div class="a rowt" style="left:708px;top:518px;font-size:13px;line-height:15px;color:#333">Блок 8 занятий</div>
<div class="a" style="left:1048px;top:518px;font-size:13px;line-height:15px;color:#1f7ad8">Активен по 16.04.2026</div>
<div class="a" style="left:1290px;width:200px;text-align:right;top:518px;font-size:13px;line-height:15px;color:#333;text-decoration:underline">Заморозить</div>
<div class="a" style="left:660px;top:540px;width:838px;height:29px;background:#f9f9f9"></div>
<div class="a rowt" style="left:727px;top:547px;font-size:13px;line-height:15px;color:#333">Персональная тренировка в тренажерном зале</div>
<div class="a" style="left:1188px;width:200px;text-align:center;top:547px;font-size:13px;line-height:15px;color:#333">8</div>
<div class="a" style="left:1290px;width:200px;text-align:right;top:547px;font-size:13px;line-height:15px;color:#333;text-decoration:underline">Использовать</div>
<svg class="a" style="left:671px;top:578px" width="10" height="10" viewBox="0 0 10 10"><circle cx="5" cy="5" r="4.3" fill="none" stroke="#9a9a9a" stroke-width="1"/><path d="M2.6 5 H7.4" stroke="#8a8a8a" stroke-width="1.1"/></svg>
<div class="a rowt" style="left:689px;top:576px;font-size:13px;line-height:15px;color:#333">Разовые услуги</div>
<div class="a" style="left:660px;top:598px;width:838px;height:29px;background:#f9f9f9"></div>
<div class="a rowt" style="left:708px;top:605px;font-size:13px;line-height:15px;color:#333">Аренда корта от 19.10.2021</div>
<div class="a" style="left:1188px;width:200px;text-align:center;top:605px;font-size:13px;line-height:15px;color:#333">0,32</div>
<div class="a" style="left:1290px;width:200px;text-align:right;top:605px;font-size:13px;line-height:15px;color:#333;text-decoration:underline">Использовать</div>
<div class="a rowt" style="left:708px;top:634px;font-size:13px;line-height:15px;color:#333">Массаж спины от 01.08.2024</div>
<div class="a" style="left:1188px;width:200px;text-align:center;top:634px;font-size:13px;line-height:15px;color:#333">1</div>
<div class="a" style="left:1290px;width:200px;text-align:right;top:634px;font-size:13px;line-height:15px;color:#333;text-decoration:underline">Использовать</div>
<div class="a" style="left:660px;top:656px;width:838px;height:29px;background:#f9f9f9"></div>
<div class="a rowt" style="left:708px;top:663px;font-size:13px;line-height:15px;color:#333">ИЗО от 17.02.2022</div>
<div class="a" style="left:1188px;width:200px;text-align:center;top:663px;font-size:13px;line-height:15px;color:#333">1</div>
<div class="a" style="left:1290px;width:200px;text-align:right;top:663px;font-size:13px;line-height:15px;color:#333;text-decoration:underline">Использовать</div>
<svg class="a" style="left:1005px;top:704px" width="18" height="12" viewBox="0 0 18 12"><path d="M1 1.5 L9 10 L17 1.5" fill="none" stroke="#6a6a6a" stroke-width="1"/></svg>
<div class="a" style="left:1027px;top:702px;font-size:14.5px;line-height:17px;color:#444">Показать ещё (74)</div>
<div class="a" style="left:659px;top:732px;font-size:16px;line-height:19px;color:#1f7ad8">Сегодня</div>
<div class="a" style="left:660px;top:755px;width:838px;height:29px;background:#f9f9f9"></div>
<svg class="a" style="left:687px;top:761px" width="16" height="16" viewBox="0 0 16 16"><defs><radialGradient id="bd" cx="0.4" cy="0.35" r="0.7"><stop offset="0" stop-color="#8fb3e6"/><stop offset="1" stop-color="#2f63b3"/></radialGradient></defs><circle cx="8" cy="8.2" r="6.6" fill="url(#bd)" stroke="#2a4f8a" stroke-width="1"/></svg>
<div class="a" style="left:714px;top:762px;font-size:13px;line-height:15px;color:#333">13:15</div>
<div class="a" style="left:795px;top:762px;font-size:13px;line-height:15px;color:#333">15:17</div>
<div class="a" style="left:852px;top:762px;font-size:13px;line-height:15px;color:#333">2 ч 2 мин</div>
<div class="a" style="left:1081px;top:762px;font-size:13px;line-height:15px;color:#333;text-decoration:underline">&nbsp;Посещение по : Карта полного посещения 12...</div>
<div class="a" style="left:1416px;top:762px;font-size:13px;line-height:15px;color:#333">1</div>

<!--END-->

</body></html>
